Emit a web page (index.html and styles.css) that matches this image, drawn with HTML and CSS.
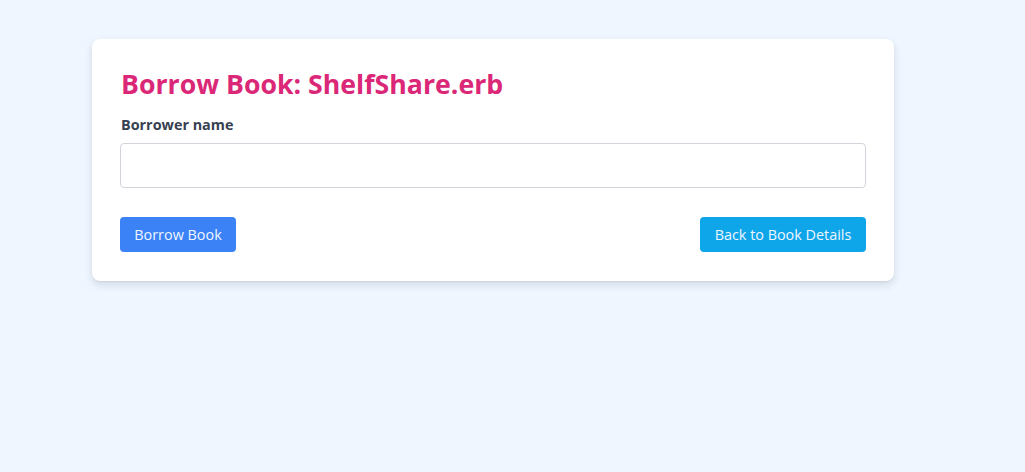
FILE: index.html
```html
<!DOCTYPE html>
<html lang="en">
<head>
<meta charset="utf-8">
<title>Borrow Book</title>
<link rel="stylesheet" href="styles.css">
</head>
<body>
<main class="page">
  <section class="card">
    <h1 class="title">Borrow Book: ShelfShare.erb</h1>
    <form class="form">
      <label class="label" for="borrower">Borrower name</label>
      <input class="input" id="borrower" type="text">
      <div class="actions">
        <button type="button" class="btn btn-primary">Borrow Book</button>
        <button type="button" class="btn btn-secondary">Back to Book Details</button>
      </div>
    </form>
  </section>
</main>
</body>
</html>
```
FILE: styles.css
```css
* { box-sizing: border-box; }
html, body { margin: 0; padding: 0; }
body {
  background: #eff6ff;
  font-family: "Open Sans", "Liberation Sans", sans-serif;
  color: #1f2937;
  min-height: 472px;
}
.page {
  padding: 39px 0 0 92px;
}
.card {
  width: 802px;
  background: #ffffff;
  border-radius: 8px;
  padding: 28px 28px 29px;
  box-shadow: 0 4px 8px rgba(15, 23, 42, 0.12), 0 1px 2px rgba(15, 23, 42, 0.06);
}
.title {
  margin: 0 0 14px 1px;
  font-size: 26.7px;
  line-height: 33px;
  font-weight: 700;
  color: #db2777;
}
.form {
  display: flex;
  flex-direction: column;
}
.label {
  display: block;
  margin: 0 0 8px 1px;
  font-size: 14.4px;
  line-height: 21px;
  font-weight: 700;
  color: #374151;
}
.input {
  display: block;
  width: 100%;
  height: 45px;
  padding: 11px 12px;
  border: 1px solid #d1d5db;
  border-radius: 4px;
  font-family: inherit;
  font-size: 14px;
  background: #fff;
}
.actions {
  display: flex;
  justify-content: space-between;
  margin-top: 29px;
}
.btn {
  height: 35px;
  padding: 0 14px;
  border: none;
  border-radius: 4px;
  font-family: inherit;
  font-size: 14.4px;
  line-height: 21px;
  color: #eff6ff;
  cursor: pointer;
}
.btn-primary { background: #3b82f6; width: 116px; }
.btn-secondary { background: #0ea5e9; width: 166px; }
```
